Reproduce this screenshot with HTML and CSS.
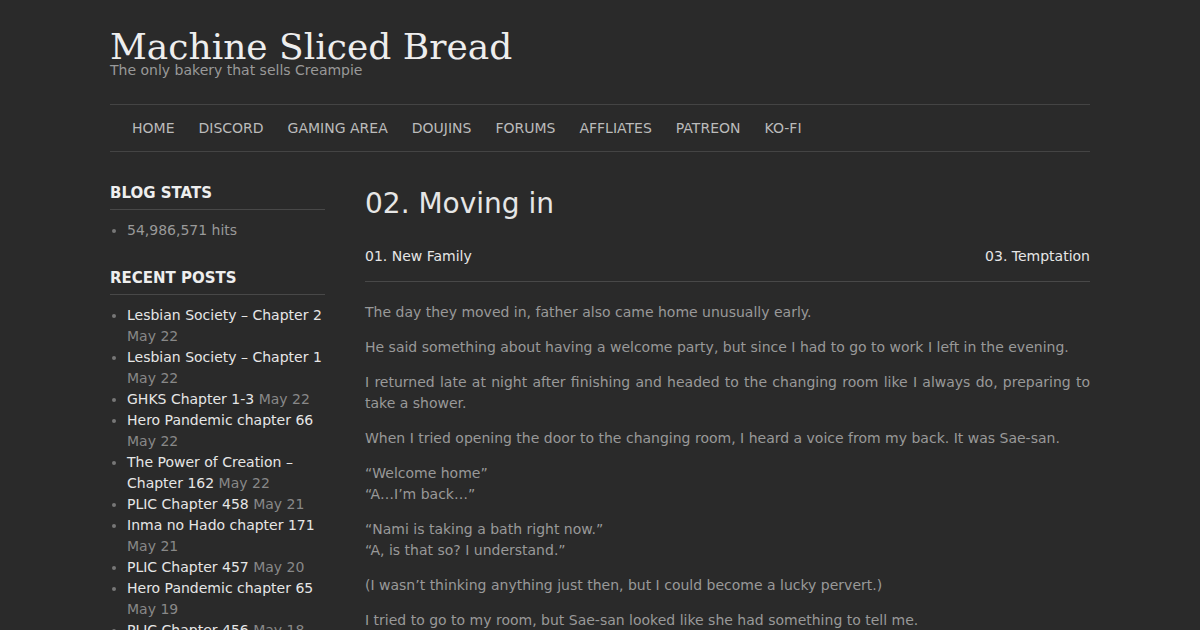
FILE: index.html
```html
<!DOCTYPE html>
<html lang="en">
<head>
    <meta charset="UTF-8">
    <meta name="viewport" content="width=device-width, initial-scale=1.0">
    <title>02. Moving in | Machine Sliced Bread</title>
    <link rel="stylesheet" href="styles.css">
</head>
<body>
    <div class="site">
        <header class="site-header">
            <h1 class="site-title"><a href="#">Machine Sliced Bread</a></h1>
            <p class="site-desc">The only bakery that sells Creampie</p>
        </header>

        <nav class="main-nav">
            <ul>
                <li><a href="#">Home</a></li>
                <li><a href="#">Discord</a></li>
                <li><a href="#">Gaming Area</a></li>
                <li><a href="#">Doujins</a></li>
                <li><a href="#">Forums</a></li>
                <li><a href="#">Affliates</a></li>
                <li><a href="#">Patreon</a></li>
                <li><a href="#">Ko-fi</a></li>
            </ul>
        </nav>

        <div class="main">
            <aside class="sidebar">
                <section class="widget">
                    <h3 class="widget-title">Blog Stats</h3>
                    <ul>
                        <li>54,986,571 hits</li>
                    </ul>
                </section>

                <section class="widget">
                    <h3 class="widget-title">Recent Posts</h3>
                    <ul>
                        <li><a href="#">Lesbian Society – Chapter 2</a> <span class="post-date">May 22</span></li>
                        <li><a href="#">Lesbian Society – Chapter 1</a> <span class="post-date">May 22</span></li>
                        <li><a href="#">GHKS Chapter 1-3</a> <span class="post-date">May 22</span></li>
                        <li><a href="#">Hero Pandemic chapter 66</a> <span class="post-date">May 22</span></li>
                        <li><a href="#">The Power of Creation – Chapter 162</a> <span class="post-date">May 22</span></li>
                        <li><a href="#">PLIC Chapter 458</a> <span class="post-date">May 21</span></li>
                        <li><a href="#">Inma no Hado chapter 171</a> <span class="post-date">May 21</span></li>
                        <li><a href="#">PLIC Chapter 457</a> <span class="post-date">May 20</span></li>
                        <li><a href="#">Hero Pandemic chapter 65</a> <span class="post-date">May 19</span></li>
                        <li><a href="#">PLIC Chapter 456</a> <span class="post-date">May 18</span></li>
                    </ul>
                </section>
            </aside>

            <article class="entry">
                <h2 class="entry-title">02. Moving in</h2>

                <div class="post-nav">
                    <a href="#">01. New Family</a>
                    <a href="#">03. Temptation</a>
                </div>

                <div class="entry-content">
                    <p>The day they moved in, father also came home unusually early.</p>
                    <p>He said something about having a welcome party, but since I had to go to work I left in the evening.</p>
                    <p>I returned late at night after finishing and headed to the changing room like I always do, preparing to take a shower.</p>
                    <p>When I tried opening the door to the changing room, I heard a voice from my back. It was Sae-san.</p>
                    <p>“Welcome home”<br>“A…I’m back…”</p>
                    <p>“Nami is taking a bath right now.”<br>“A, is that so? I understand.”</p>
                    <p>(I wasn’t thinking anything just then, but I could become a lucky pervert.)</p>
                    <p>I tried to go to my room, but Sae-san looked like she had something to tell me.</p>
                    <p>“Say, do you have a moment?”</p>
                </div>
            </article>
        </div>
    </div>
</body>
</html>
```

FILE: styles.css
```css
body {
    margin: 0;
    padding: 0;
    background-color: #2a2a2a;
    color: #999;
    font-family: "DejaVu Sans", Verdana, sans-serif;
    font-size: 14px;
    line-height: 21px;
}

a {
    color: #e6e6e6;
    text-decoration: none;
}

ul {
    margin: 0;
    padding: 0;
}

.site {
    width: 980px;
    margin: 0 auto;
}

/* Header */
.site-header {
    padding-top: 26px;
    height: 78px;
    box-sizing: border-box;
}

.site-title {
    margin: 0;
    font-family: "DejaVu Serif", Georgia, serif;
    font-size: 36px;
    font-weight: normal;
    line-height: 42px;
}

.site-title a {
    color: #eee;
}

.site-desc {
    margin: 0;
    line-height: 4px;
    color: #999;
}

/* Menu */
.main-nav {
    margin-top: 26px;
    border-top: 1px solid #444;
    border-bottom: 1px solid #444;
}

.main-nav ul {
    display: flex;
    list-style: none;
    padding: 0 10px;
}

.main-nav a {
    display: block;
    padding: 13px 12px 12px;
    color: #bbb;
    text-transform: uppercase;
}

/* Layout */
.main {
    display: flex;
    gap: 40px;
    padding-top: 31px;
}

.sidebar {
    width: 215px;
    flex-shrink: 0;
}

.entry {
    flex: 1;
    min-width: 0;
}

/* Widgets */
.widget {
    margin-bottom: 27px;
}

.widget-title {
    margin: 0 0 10px;
    padding-bottom: 5px;
    border-bottom: 1px solid #484848;
    color: #eee;
    font-size: 15px;
    font-weight: bold;
    text-transform: uppercase;
}

.widget ul {
    list-style: none;
}

.widget li {
    position: relative;
    padding-left: 17px;
}

.widget li::before {
    content: "";
    position: absolute;
    left: 2px;
    top: 9px;
    width: 4px;
    height: 4px;
    border-radius: 50%;
    background-color: #777;
}

.post-date {
    color: #888;
}

/* Post */
.entry-title {
    margin: 0;
    padding-top: 1px;
    color: #e6e6e6;
    font-size: 28px;
    font-weight: normal;
    line-height: 40px;
}

.post-nav {
    display: flex;
    justify-content: space-between;
    margin-top: 22px;
    padding-bottom: 14px;
    border-bottom: 1px solid #484848;
}

.entry-content {
    padding-top: 20px;
}

.entry-content p {
    margin: 0 0 14px;
    text-align: justify;
}
```
